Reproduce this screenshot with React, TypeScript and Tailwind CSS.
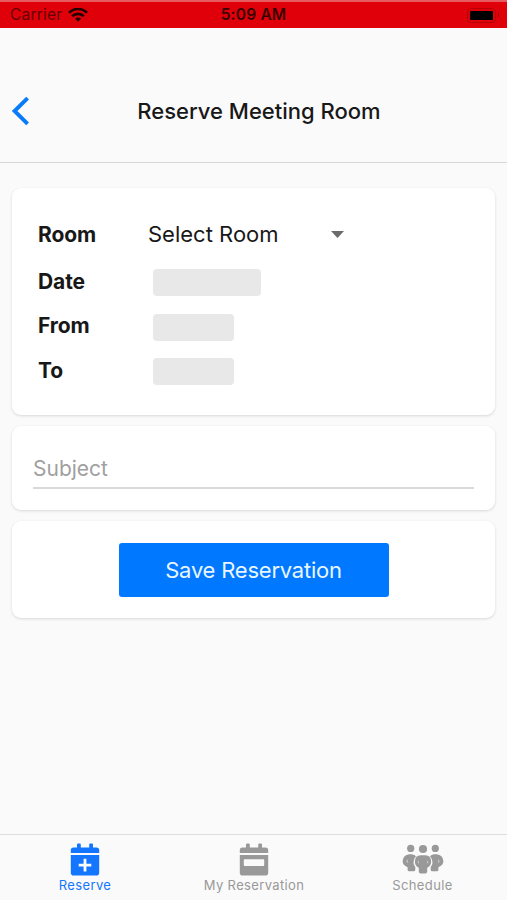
import React from 'react';

function WifiIcon() {
  return (
    <svg width="20" height="14" viewBox="0 0 20 14" fill="none" stroke="#240000" strokeWidth="2.7">
      <path d="M1 4.7C6-.3 14-.3 19 4.7" />
      <path d="M4.2 8.3c3.2-3.2 8.4-3.2 11.6 0" />
      <path d="M7 10.6c1.7-1.6 4.3-1.6 6 0L10 13.8Z" fill="#240000" stroke="none" />
    </svg>
  );
}

function CalendarIcon({ plus = false }: { plus?: boolean }) {
  return (
    <svg width="30" height="33" viewBox="0 0 30 33" fill="currentColor">
      <path d="M.8 10V7.2Q.8 4.4 3.6 4.4H7V1.6Q7 .6 8 .6h1.8q1 0 1 1v2.8h8.4V1.6q0-1 1-1H22q1 0 1 1v2.8h3.4q2.8 0 2.8 2.8V10Z" />
      {plus ? (
        <path fillRule="evenodd" d="M.8 12h28.4v17.8q0 2.8-2.8 2.8H3.6Q.8 32.6.8 29.8Zm12.8 3.8v4.9H8.7v2.8h4.9v4.9h2.8v-4.9h4.9v-2.8h-4.9v-4.9Z" />
      ) : (
        <path fillRule="evenodd" d="M.8 12h28.4v17.8q0 2.8-2.8 2.8H3.6Q.8 32.6.8 29.8Zm4.9 4.2q-.9 0-.9.9v4.9q0 .9.9.9h18.6q.9 0 .9-.9v-4.9q0-.9-.9-.9Z" />
      )}
    </svg>
  );
}

function PeopleIcon() {
  const side =
    'M7.2 10.3H10Q12.6 10.6 14 12.2Q10.6 16 12 21L13.3 23V25.8q0 1.5-1.6 1.5H7.2Q5.6 27.3 5.6 25.8V23.2Q.6 21.2.6 17Q1.2 11 7.2 10.3ZM5.4 15.2Q3.8 17 5.4 19.2Z';
  return (
    <svg width="42" height="31" viewBox="0 0 42 31" fill="currentColor" fillRule="evenodd">
      <circle cx="8.7" cy="4.4" r="3.6" />
      <circle cx="33.3" cy="4.4" r="3.6" />
      <circle cx="21" cy="5" r="4.1" />
      <path d={side} />
      <path d={side} transform="translate(42 0) scale(-1 1)" />
      <path d="M18.5 11.2h5q5.4 0 5.6 6.4q0 4.6-3.9 6.2v3.7q0 1.9-1.9 1.9h-4.6q-1.9 0-1.9-1.9v-3.7q-3.9-1.6-3.9-6.2q.2-6.4 5.6-6.4ZM16.4 16.3q-1.3 1.8 0 3.6Zm9.2 0v3.6q1.3-1.8 0-3.6Z" />
    </svg>
  );
}

function Field({ label, wide = false }: { label: string; wide?: boolean }) {
  return (
    <div className="flex h-[44.5px] items-center">
      <span className="w-[115px] pt-px text-[21px] leading-[26px] font-bold tracking-[-0.1px]">{label}</span>
      <div className={`mt-[3px] h-[27px] rounded-[4px] bg-[#e8e8e8] ${wide ? 'w-[108px]' : 'w-[81px]'}`} />
    </div>
  );
}

const card = 'rounded-[9px] bg-white shadow-[0_1px_3px_rgba(0,0,0,0.14)]';

export default function App() {
  return (
    <div className="flex h-[900px] w-[507px] flex-col overflow-hidden bg-[#fafafa] font-['Inter','Liberation_Sans',sans-serif] text-[#181818]">
      <div className="grid h-7 shrink-0 grid-cols-3 items-center border-t-2 border-[#e65b60] bg-[#df0009] text-[#390002]">
        <div className="flex items-center gap-[6px] pl-[10px]">
          <span className="text-[15.5px] leading-5 tracking-[0.2px] text-[#650003]">Carrier</span>
          <WifiIcon />
        </div>
        <span className="text-center text-[15.5px] leading-5 font-semibold tracking-[0.2px]">5:09 AM</span>
        <div className="flex items-center justify-end pr-[8px]">
          <div className="h-[15px] w-[29px] rounded-[4px] border border-[#b50007] p-[2px]">
            <div className="h-full rounded-[1px] bg-black" />
          </div>
          <div className="ml-[2px] h-[4px] w-[1px] bg-[#980006]" />
        </div>
      </div>

      <header className="grid h-[135px] shrink-0 grid-cols-[60px_1fr_49px] items-center border-b border-[#d8d8d8] pt-[32px]">
        <button className="pl-[11px]" aria-label="Back">
          <svg width="20" height="30" viewBox="0 0 20 30" fill="none" stroke="#087cf8" strokeWidth="3.9">
            <path d="M16.6 2.2 3.6 15l13 12.8" />
          </svg>
        </button>
        <h1 className="text-center text-[22px] leading-7 font-medium whitespace-nowrap">Reserve Meeting Room</h1>
      </header>

      <main className="flex flex-1 flex-col gap-[11px] px-[12px] pt-[25px]">
        <section className={`${card} h-[227px] shrink-0 pt-[21px] pl-[26px]`}>
          <div className="flex h-[50px] items-center">
            <span className="w-[110px] pt-px text-[21px] leading-[26px] font-bold tracking-[-0.1px]">Room</span>
            <span className="w-[183px] text-[22px] leading-7 whitespace-nowrap">Select Room</span>
            <svg width="13" height="7" viewBox="0 0 13 7" fill="#6b6b6b">
              <path d="M0 0h13L6.5 7Z" />
            </svg>
          </div>
          <Field label="Date" wide />
          <Field label="From" />
          <Field label="To" />
        </section>

        <section className={`${card} h-[84px] shrink-0 px-[21px] pt-[23px]`}>
          <div className="h-[40px] border-b-2 border-[#d9d9d9] pt-[5px] text-[21px] leading-[30px] text-[#a0a0a0]">Subject</div>
        </section>

        <section className={`${card} flex h-[97px] shrink-0 items-center justify-center`}>
          <button className="h-[54px] w-[270px] rounded-[3px] bg-[#0078ff] pt-px text-[22px] tracking-[-0.22px] text-[#e8f6ff]">Save Reservation</button>
        </section>
      </main>

      <nav className="grid h-[66px] shrink-0 grid-cols-3 border-t border-[#dedede] pt-[8px] text-[13px] leading-4 text-[#999]">
        <div className="flex flex-col items-center gap-px text-[#1476ff]">
          <CalendarIcon plus />
          <span className="pl-px tracking-[0.4px]">Reserve</span>
        </div>
        <div className="flex flex-col items-center gap-px">
          <CalendarIcon />
          <span className="pl-px tracking-[0.35px]">My Reservation</span>
        </div>
        <div className="flex flex-col items-center gap-px">
          <div className="h-[33px] pt-px"><PeopleIcon /></div>
          <span className="tracking-[0.4px]">Schedule</span>
        </div>
      </nav>
    </div>
  );
}
